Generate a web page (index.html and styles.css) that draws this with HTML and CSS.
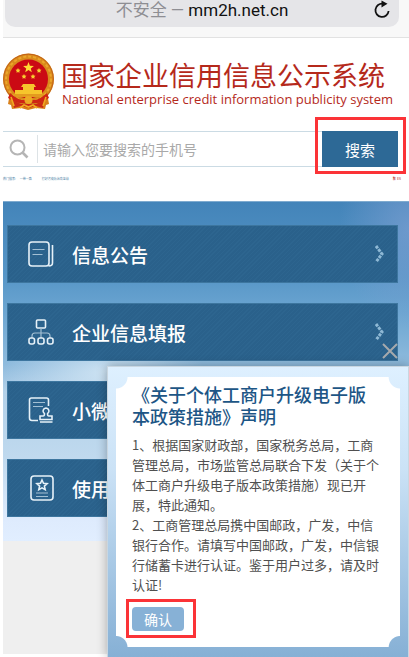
FILE: index.html
```html
<!DOCTYPE html>
<html lang="zh-CN">
<head>
    <meta charset="UTF-8">
    <meta name="viewport" content="width=device-width, initial-scale=1.0">
    <title>国家企业信用信息公示系统</title>
    <link rel="stylesheet" href="styles.css">
</head>
<body>
<div class="page">
    <div class="browser-bar">
        <div class="address">
            <span class="address-text"><span class="insecure">不安全 —</span> mm2h.net.cn</span>
            <button class="reload" type="button" aria-label="刷新">
                <svg width="18" height="20" viewBox="0 0 18 20">
                    <path d="M10 3.800A6.600 6.600 0 1 0 15.600 11" fill="none" stroke="#111" stroke-width="1.800"/>
                    <path d="M8.500 0.500l6 3.300-6 3.700z" fill="#111"/>
                </svg>
            </button>
        </div>
    </div>

    <header class="header">
        <svg class="emblem" width="51" height="58" viewBox="0 0 51 58">
            <path d="M7 40L5 51l3 1 1 4 9-1 7 2 8-2 9 1 1-4 3-1-2-11z" fill="#d9801b"/>
            <circle cx="25.500" cy="26" r="25.500" fill="#d98a1c"/>
            <circle cx="25.500" cy="26" r="22.500" fill="none" stroke="#eca62a" stroke-width="2" stroke-dasharray="3 2"/>
            <circle cx="25.500" cy="26" r="24.800" fill="none" stroke="#c2611a" stroke-width="1"/>
            <circle cx="25.500" cy="26" r="19.500" fill="#cb0a14"/>
            <path d="M25.500 9l1.400 3.700 4 .2-3.100 2.500 1 3.900-3.300-2.200-3.300 2.200 1-3.900-3.100-2.500 4-.2z" fill="#ffdc35"/>
            <g fill="#f9ce30">
                <path d="M15 15l.8 1.500 1.700.3-1.200 1.200.2 1.700-1.500-.8-1.500.8.200-1.700-1.200-1.200 1.700-.3z"/>
                <path d="M36 15l.8 1.500 1.700.3-1.200 1.200.2 1.700-1.500-.8-1.500.8.200-1.700-1.200-1.200 1.700-.3z"/>
                <path d="M21 21l.8 1.500 1.700.3-1.200 1.200.2 1.700-1.500-.8-1.500.8.200-1.700-1.200-1.200 1.700-.3z"/>
                <path d="M30 21l.8 1.500 1.700.3-1.200 1.200.2 1.700-1.500-.8-1.500.8.200-1.700-1.200-1.200 1.700-.3z"/>
            </g>
            <path d="M20 31h11l2 3h-2v3h8v4H12v-4h8v-3h-2z" fill="#f6c52c"/>
            <path d="M10 41h31l-3 3H13z" fill="#e39b1f"/>
            <path d="M7 40q8 7 12 7h13q4 0 12-7l2 5q-8 5-12 5H17q-4 0-12-5z" fill="#cf2414"/>
            <circle cx="25.500" cy="47" r="4" fill="#eda824"/>
            <path d="M9 47l9 4h15l9-4-2 8-7-2-7 2-8-2-7 2z" fill="#cb2a15"/>
            <path d="M8 44l3 9M43 44l-3 9M17 55l4-3 4.500 2 4.500-2 4 3" fill="none" stroke="#f0a922" stroke-width="1.600"/>
        </svg>
        <div class="brand">
            <h1 class="brand-cn">国家企业信用信息公示系统</h1>
            <p class="brand-en">National enterprise credit information publicity system</p>
        </div>
    </header>

    <form class="search">
        <label class="search-icon" for="keyword" aria-label="搜索">
            <svg width="20" height="20" viewBox="0 0 20 20" fill="none" stroke="#b5b5b5">
                <circle cx="8.500" cy="8.500" r="7" stroke-width="2"/>
                <path d="M13.500 13.500l5 5" stroke-width="2.600"/>
            </svg>
        </label>
        <input class="search-input" type="text" id="keyword" name="keyword" placeholder="请输入您要搜索的手机号">
        <button class="search-btn" type="button">搜索</button>
    </form>

    <div class="hot">
        <span>热门搜索:</span>
        <span>一带一路</span>
        <span class="hot-last">打好污染防治攻坚战</span>
        <span class="lang">繁 &nbsp;EN</span>
    </div>

    <nav class="menu">
        <a class="menu-item" href="#">
            <svg class="menu-icon" width="26" height="26" viewBox="0 0 26 26">
                <rect x="1" y="1" width="20" height="24" rx="3"/>
                <path d="M24.500 4v18q0 3-4 3"/>
                <path d="M4.500 8.500h12M4.500 13.500h10" class="thin"/>
            </svg>
            <span class="menu-text">信息公告</span>
            <svg class="arrow" width="10" height="18" viewBox="0 0 10 18"><path d="M2 1l6 8-6 8"/></svg>
        </a>
        <a class="menu-item" href="#">
            <svg class="menu-icon" width="26" height="26" viewBox="0 0 26 26">
                <rect x="8.500" y="1" width="9" height="8" rx="1"/>
                <path d="M13 9v10M4 19v-2q0-3 3-3h12q3 0 3 3v2" class="thin"/>
                <rect x="1" y="19" width="5.500" height="6" rx="2"/>
                <rect x="10" y="19" width="6" height="6" rx="2"/>
                <rect x="19.500" y="19" width="5.500" height="6" rx="2"/>
            </svg>
            <span class="menu-text">企业信息填报</span>
            <svg class="arrow" width="10" height="18" viewBox="0 0 10 18"><path d="M2 1l6 8-6 8"/></svg>
        </a>
        <a class="menu-item" href="#">
            <svg class="menu-icon" width="26" height="26" viewBox="0 0 26 26">
                <path d="M20.500 9V3q0-2-2-2h-15q-2 0-2 2v18q0 2.500 2.500 2.500h6"/>
                <path d="M5 5.500h12M5 9.500h10" class="thin"/>
                <path d="M18 11a3 3 0 0 1 1.600 5.500q-.3 2.500 1.400 2.500h3v3.500H12V19h3q1.700 0 1.400-2.500A3 3 0 0 1 18 11zM12 25h12.500"/>
            </svg>
            <span class="menu-text">小微企业名录</span>
            <svg class="arrow" width="10" height="18" viewBox="0 0 10 18"><path d="M2 1l6 8-6 8"/></svg>
        </a>
        <a class="menu-item" href="#">
            <svg class="menu-icon" width="26" height="26" viewBox="0 0 26 26">
                <rect x="3" y="1" width="22" height="24" rx="3"/>
                <path d="M14 5l1.500 3.300 3.600.4-2.700 2.400.8 3.500-3.200-1.800-3.200 1.800.8-3.500-2.700-2.400 3.600-.4z"/>
                <path d="M8 18h12M8 21.500h12" class="thin"/>
            </svg>
            <span class="menu-text">使用帮助</span>
            <svg class="arrow" width="10" height="18" viewBox="0 0 10 18"><path d="M2 1l6 8-6 8"/></svg>
        </a>
    </nav>

    <div class="rest"></div>

    <div class="notice" role="dialog" aria-labelledby="noticeTitle">
        <button class="close" type="button" aria-label="关闭">
            <svg width="16" height="16" viewBox="0 0 16 16"><path d="M1 1l14 14M15 1L1 15" stroke="#a5a9ac" stroke-width="2"/></svg>
        </button>
        <div class="notice-body">
            <h2 class="notice-title" id="noticeTitle">《关于个体工商户升级电子版本政策措施》声明</h2>
            <p>1、根据国家财政部，国家税务总局，工商管理总局，市场监管总局联合下发（关于个体工商户升级电子版本政策措施）现已开展，特此通知。</p>
            <p>2、工商管理总局携中国邮政，广发，中信银行合作。请填写中国邮政，广发，中信银行储蓄卡进行认证。鉴于用户过多，请及时认证!</p>
            <button class="confirm" type="button">确认</button>
        </div>
    </div>
</div>
</body>
</html>
```

FILE: styles.css
```css
* {
    box-sizing: border-box;
}
body {
    margin: 0;
    background: #fff;
    font-family: "Noto Sans CJK SC", sans-serif;
    text-spacing-trim: space-all;
}
h1, h2, p {
    margin: 0;
}
button {
    padding: 0;
    border: none;
    background: none;
    font-family: inherit;
    cursor: pointer;
}
svg {
    display: block;
}
.page {
    position: relative;
    display: flex;
    flex-direction: column;
    min-height: 100vh;
    padding: 0 0 3px 3px;
}

/* address bar */
.browser-bar {
    padding: 0 10px 10px 2px;
    background: #f8f8f8;
    border-bottom: 1px solid #e2e2e2;
}
.address {
    display: flex;
    align-items: center;
    height: 27px;
    padding: 0 8px 8px;
    background: #e5e5e8;
    border-radius: 0 0 10px 10px;
}
.address-text {
    flex: 1;
    padding-left: 18px;
    text-align: center;
    font-family: Roboto, "Noto Sans CJK SC", sans-serif;
    font-size: 17px;
    line-height: 20px;
    color: #111;
}
.insecure {
    color: #8e8e93;
}

/* logo and title */
.header {
    display: flex;
    align-items: center;
    gap: 7px;
    padding: 15px 0 20px;
}
.emblem {
    flex: none;
}
.brand {
    padding-top: 2px;
    color: #b5291b;
    white-space: nowrap;
}
.brand-cn {
    font-size: 27px;
    font-weight: 400;
    line-height: 32px;
}
.brand-en {
    padding-left: 1px;
    font-family: "Open Sans", sans-serif;
    font-size: 13px;
    line-height: 16px;
}

/* search */
.search {
    display: flex;
    align-items: center;
    height: 36px;
    margin-right: 11px;
    border-top: 1px solid #cbdbe4;
    border-bottom: 1px solid #cbdbe4;
}
.search-icon {
    padding: 4px 8px 4px 6px;
    border-right: 1px solid #dde3e6;
}
.search-input {
    flex: 1;
    min-width: 0;
    padding: 0 5px;
    border: none;
    outline: none;
    font-family: inherit;
    font-size: 14px;
}
.search-input::placeholder {
    color: #a9a9a9;
}
.search-btn {
    position: relative;
    width: 76px;
    height: 36px;
    background: #2d6996;
    color: #fff;
    font-size: 15px;
}
.search-btn::after,
.confirm::after {
    content: "";
    position: absolute;
    border: 3px solid #fb3337;
}
.search-btn::after {
    inset: -14px -8px -7px -7px;
}

.hot {
    display: flex;
    gap: 4px;
    height: 34px;
    padding: 10px 8px 0 0;
    font-size: 3px;
    line-height: 4px;
    color: #4d7fa5;
}
.hot-last {
    margin-left: 6px;
}
.lang {
    margin-left: auto;
    color: #b5291b;
}

/* menu */
.menu {
    display: flex;
    flex-direction: column;
    gap: 20px;
    padding: 23px 11px 24px 4px;
    border-top: 1px solid #7fabcf;
    background:
        radial-gradient(ellipse 100px 45px at 25% 50%, rgba(226, 240, 250, 0.7), transparent),
        radial-gradient(ellipse 70px 100px at 100% 8%, rgba(124, 159, 210, 0.7), transparent),
        linear-gradient(#4384b9, #5796c7 22%, #6ba5d1 32%, #8fbbdd 48%, #b3d1e9 56%, #bfd9ee 75%, #deebfd 94%, #e1eeff);
}
.menu-item {
    display: flex;
    align-items: center;
    height: 58px;
    padding: 0 13px 0 20px;
    border: 1px solid #3d769f;
    background: repeating-linear-gradient(135deg, #2a618b 0, #2a618b 2px, #2d658f 2px, #2d658f 3px);
    color: #fff;
    text-decoration: none;
}
.menu-icon {
    flex: none;
    fill: none;
    stroke: #e6f1f8;
    stroke-width: 1.6;
}
.thin {
    stroke: #a3c0d4;
    stroke-width: 1.2;
}
.menu-text {
    flex: 1;
    padding-left: 18px;
    font-size: 19px;
    font-weight: 500;
}
.arrow {
    fill: none;
    stroke: #8fb9d5;
    stroke-width: 3;
    stroke-dasharray: 3 1;
}
.rest {
    flex: 1;
    background: #efefef;
}

/* notice popup */
.notice {
    position: absolute;
    top: 366px;
    left: 107px;
    right: 0;
    padding: 10px 8px;
    border: 1px solid #c9d6e0;
    border-bottom: none;
    background: linear-gradient(#def0ff, #cbe2f6 35%, #86b0d5);
    box-shadow: 0 0 10px rgba(0, 0, 0, 0.3);
}
.close {
    position: absolute;
    top: -24px;
    right: 10px;
}
.notice-body {
    padding: 6px 16px 16px;
    background:
        radial-gradient(circle at 0 0, transparent 11px, #fff 12px) 0 0 / 55% 55% no-repeat,
        radial-gradient(circle at 100% 0, transparent 11px, #fff 12px) 100% 0 / 55% 55% no-repeat,
        radial-gradient(circle at 0 100%, transparent 11px, #fff 12px) 0 100% / 55% 55% no-repeat,
        radial-gradient(circle at 100% 100%, transparent 11px, #fff 12px) 100% 100% / 55% 55% no-repeat;
    font-size: 13px;
    line-height: 20px;
    color: #505050;
}
.notice-title {
    margin-bottom: 8px;
    padding-right: 12px;
    font-size: 18px;
    font-weight: 500;
    line-height: 22px;
    color: #1d5686;
}
.confirm {
    position: relative;
    display: block;
    width: 52px;
    height: 24px;
    margin-top: 12px;
    border-radius: 4px;
    background: #87b1d6;
    color: #fff;
    font-size: 14px;
    line-height: 24px;
}
.confirm::after {
    inset: -8px -12px -7px -6px;
}
```
